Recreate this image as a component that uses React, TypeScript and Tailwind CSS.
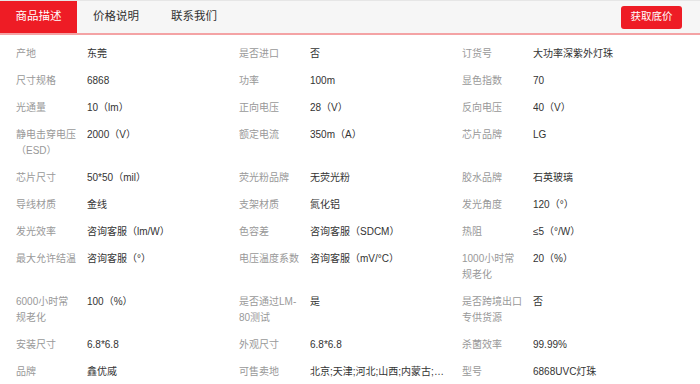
import React from "react";

type Cell = [string, string];

const rows: Cell[][] = [
  [["产地", "东莞"], ["是否进口", "否"], ["订货号", "大功率深紫外灯珠"]],
  [["尺寸规格", "6868"], ["功率", "100m"], ["显色指数", "70"]],
  [["光通量", "10（lm）"], ["正向电压", "28（V）"], ["反向电压", "40（V）"]],
  [["静电击穿电压（ESD）", "2000（V）"], ["额定电流", "350m（A）"], ["芯片品牌", "LG"]],
  [["芯片尺寸", "50*50（mil）"], ["荧光粉品牌", "无荧光粉"], ["胶水品牌", "石英玻璃"]],
  [["导线材质", "金线"], ["支架材质", "氮化铝"], ["发光角度", "120（°）"]],
  [["发光效率", "咨询客服（lm/W）"], ["色容差", "咨询客服（SDCM）"], ["热阻", "≤5（°/W）"]],
  [["最大允许结温", "咨询客服（°）"], ["电压温度系数", "咨询客服（mV/°C）"], ["1000小时常规老化", "20（%）"]],
  [["6000小时常规老化", "100（%）"], ["是否通过LM-80测试", "是"], ["是否跨境出口专供货源", "否"]],
  [["安装尺寸", "6.8*6.8"], ["外观尺寸", "6.8*6.8"], ["杀菌效率", "99.99%"]],
  [["品牌", "鑫优威"], ["可售卖地", "北京;天津;河北;山西;内蒙古;辽宁;吉林;黑龙江"], ["型号", "6868UVC灯珠"]],
];

export default function App() {
  return (
    <div
      className="w-[700px] h-[384px] bg-white overflow-hidden"
      style={{ fontFamily: '"Liberation Sans", Arial, "Noto Sans CJK SC", sans-serif' }}
    >
      <div className="flex items-stretch h-[35px] bg-[#f6f6f6] border-t border-[#e6e6e6] border-b-2 border-b-[#f4a3a5]">
        <div className="w-[77px] flex items-center justify-center bg-[#ee1c25] text-white text-[11.5px]">商品描述</div>
        <div className="w-[78px] flex items-center justify-center text-[#333] text-[11.5px]">价格说明</div>
        <div className="w-[78px] flex items-center justify-center text-[#333] text-[11.5px]">联系我们</div>
        <div className="flex-1" />
        <div className="flex items-center pr-[18px]">
          <button className="w-[61px] h-[23px] rounded-[3px] bg-[#ee1c25] text-white text-[10.5px] flex items-center justify-center">
            获取底价
          </button>
        </div>
      </div>
      <div className="pl-[16px] pr-[15px]">
        {rows.map((row, i) => (
          <div key={i} className="grid grid-cols-3 pt-[11px]">
            {row.map(([label, value], j) => (
              <div key={j} className="flex text-[10px] leading-[16px]">
                <div className="w-[61px] mr-[10px] shrink-0 text-[#999]">{label}</div>
                <div className="w-[134px] truncate text-[#333]">{value}</div>
              </div>
            ))}
          </div>
        ))}
      </div>
    </div>
  );
}
